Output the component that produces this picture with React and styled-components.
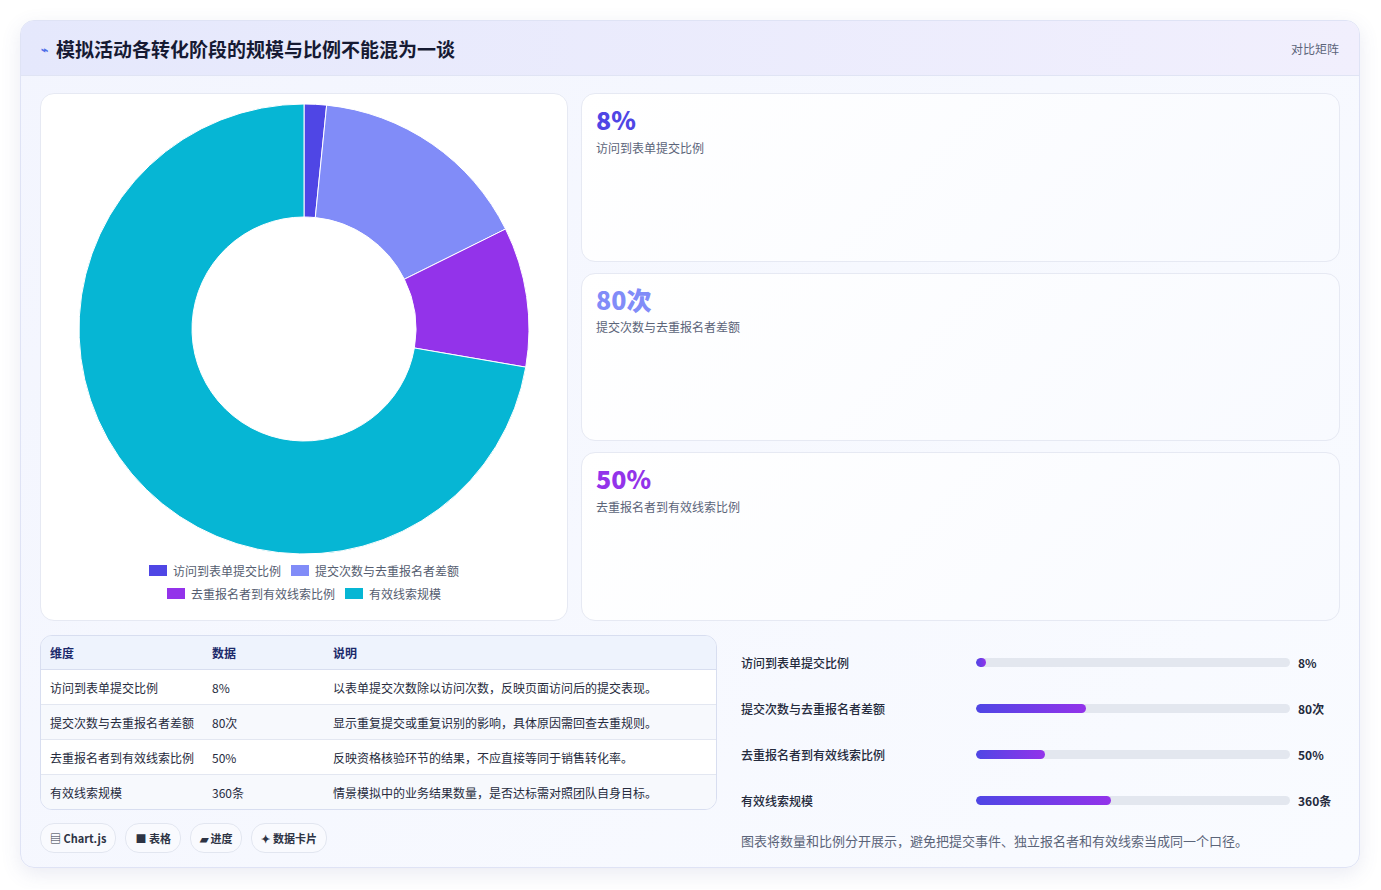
import React from "react";
import styled, { createGlobalStyle } from "styled-components";

const G = createGlobalStyle`
  body{margin:0;background:#fff;font-family:"Noto Sans CJK SC","Noto Sans",sans-serif;}
`;
const Page = styled.div`padding:20px 21px 21px 20px;`;
const Card = styled.div`
  width:1340px;height:848px;box-sizing:border-box;border:1px solid #dfe3f5;border-radius:14px;
  background:linear-gradient(135deg,#f3f5fe,#f9fbff);box-shadow:0 6px 20px rgba(80,90,160,.12);overflow:hidden;
`;
const Header = styled.div`
  height:55px;box-sizing:border-box;display:flex;align-items:center;justify-content:space-between;padding:0 20px;
  background:linear-gradient(90deg,#e5e8fc,#f1effd);border-bottom:1px solid #e0e4f4;
`;
const Title = styled.div`display:flex;align-items:center;gap:8px;font-size:19px;font-weight:700;color:#161a33;`;
const Tag = styled.div`font-size:12px;color:#5b6479;`;
const Body = styled.div`padding:17px 19px;display:flex;flex-direction:column;gap:14px;`;
const Top = styled.div`display:grid;grid-template-columns:528px 1fr;gap:13px;height:528px;`;
const ChartBox = styled.div`background:#fff;border:1px solid #e6e9f3;border-radius:14px;display:flex;flex-direction:column;align-items:center;padding-top:10px;box-sizing:border-box;`;
const Legend = styled.div`display:flex;flex-wrap:wrap;justify-content:center;gap:6px 10px;width:330px;margin-top:6px;font-size:12px;color:#555d70;`;
const LItem = styled.div`display:flex;align-items:center;gap:6px;`;
const Sw = styled.span`width:18px;height:11px;background:${p=>p.c};display:inline-block;`;
const Stats = styled.div`display:grid;grid-template-rows:repeat(3,1fr);gap:11px;`;
const Stat = styled.div`background:linear-gradient(135deg,#fff,#f8faff);border:1px solid #e6e9f3;border-radius:14px;padding:12px 14px;`;
const Big = styled.div`font-size:25px;font-weight:800;color:${p=>p.c};line-height:1.1;font-family:"Noto Sans CJK SC",sans-serif;`;
const Small = styled.div`font-size:12px;color:#5b6479;margin-top:5px;`;
const Bottom = styled.div`display:grid;grid-template-columns:677px 1fr;gap:12px;`;
const Table = styled.table`width:100%;border-collapse:separate;border-spacing:0;border:1px solid #d8def0;border-radius:12px;overflow:hidden;font-size:12px;color:#262b3d;`;
const Th = styled.th`text-align:left;font-weight:700;color:#1c2a6b;background:#eef3fd;height:33px;padding:0 9px;border-bottom:1px solid #d8def0;`;
const Td = styled.td`height:34px;padding:0 9px;border-top:${p=>p.first?"none":"1px solid #e3e7f1"};background:${p=>p.alt?"#f7f9fd":"#fff"};`;
const Chips = styled.div`display:flex;gap:9px;margin-top:13px;`;
const Chip = styled.div`height:28px;padding:0 9px;border:1px solid #e2e6f0;border-radius:14px;background:#f9fafe;display:flex;align-items:center;gap:3px;font-size:11px;font-weight:700;color:#2d3344;`;
const Bars = styled.div`padding:4px 0 0 12px;display:flex;flex-direction:column;`;
const BarRow = styled.div`display:grid;grid-template-columns:227px 314px 1fr;align-items:center;gap:8px;height:46px;font-size:12px;color:#242a3c;font-weight:500;`;
const Track = styled.div`height:9px;background:#e3e7ef;border-radius:5px;overflow:hidden;`;
const Fill = styled.div`height:100%;border-radius:5px;background:linear-gradient(90deg,#4f46e5,#9333ea);`;
const Val = styled.div`font-weight:700;`;
const Note = styled.div`font-size:13px;color:#5b6479;margin-top:8px;`;

const segs=[{v:8,c:"#4f46e5"},{v:80,c:"#818cf8"},{v:50,c:"#9333ea"},{v:360,c:"#06b6d4"}];
function Donut(){
  const cx=264,cy=225,R=225,r=112,tot=498;let a=0;
  const pt=(ang,rad)=>[cx+rad*Math.sin(ang),cy-rad*Math.cos(ang)];
  return <svg width="528" height="452" viewBox="0 0 528 452">{segs.map((s,i)=>{
    const a0=a,a1=a+s.v/tot*2*Math.PI;a=a1;const L=a1-a0>Math.PI?1:0;
    const [x0,y0]=pt(a0,R),[x1,y1]=pt(a1,R),[x2,y2]=pt(a1,r),[x3,y3]=pt(a0,r);
    return <path key={i} fill={s.c} stroke="#fff" strokeWidth="1" d={`M${x0} ${y0}A${R} ${R} 0 ${L} 1 ${x1} ${y1}L${x2} ${y2}A${r} ${r} 0 ${L} 0 ${x3} ${y3}Z`}/>;})}</svg>;
}
const rows=[["访问到表单提交比例","8%","以表单提交次数除以访问次数，反映页面访问后的提交表现。",2],["提交次数与去重报名者差额","80次","显示重复提交或重复识别的影响，具体原因需回查去重规则。",35],["去重报名者到有效线索比例","50%","反映资格核验环节的结果，不应直接等同于销售转化率。",22],["有效线索规模","360条","情景模拟中的业务结果数量，是否达标需对照团队自身目标。",43]];

export default function App(){return <><G/><Page><Card>
<Header><Title><span style={{color:"#4f6fe8",fontSize:12}}>⌁</span>模拟活动各转化阶段的规模与比例不能混为一谈</Title><Tag>对比矩阵</Tag></Header>
<Body>
<Top>
<ChartBox><Donut/><Legend>
<LItem><Sw c="#4f46e5"/>访问到表单提交比例</LItem><LItem><Sw c="#818cf8"/>提交次数与去重报名者差额</LItem>
<LItem><Sw c="#9333ea"/>去重报名者到有效线索比例</LItem><LItem><Sw c="#06b6d4"/>有效线索规模</LItem></Legend></ChartBox>
<Stats>
<Stat><Big c="#4f46e5">8%</Big><Small>访问到表单提交比例</Small></Stat>
<Stat><Big c="#818cf8">80次</Big><Small>提交次数与去重报名者差额</Small></Stat>
<Stat><Big c="#9333ea">50%</Big><Small>去重报名者到有效线索比例</Small></Stat>
</Stats>
</Top>
<Bottom>
<div><Table><thead><tr><Th style={{width:144}}>维度</Th><Th style={{width:103}}>数据</Th><Th>说明</Th></tr></thead>
<tbody>{rows.map((r,i)=><tr key={i}><Td first={i===0} alt={i%2===1}>{r[0]}</Td><Td first={i===0} alt={i%2===1}>{r[1]}</Td><Td first={i===0} alt={i%2===1}>{r[2]}</Td></tr>)}</tbody></Table>
<Chips><Chip>▤ Chart.js</Chip><Chip>■ 表格</Chip><Chip>▰ 进度</Chip><Chip>✦ 数据卡片</Chip></Chips></div>
<Bars>{rows.map((r,i)=><BarRow key={i}><div>{r[0]}</div><Track><Fill style={{width:`${r[3]}%`,minWidth:10}}/></Track><Val>{r[1]}</Val></BarRow>)}
<Note>图表将数量和比例分开展示，避免把提交事件、独立报名者和有效线索当成同一个口径。</Note></Bars>
</Bottom>
</Body></Card></Page></>;}
